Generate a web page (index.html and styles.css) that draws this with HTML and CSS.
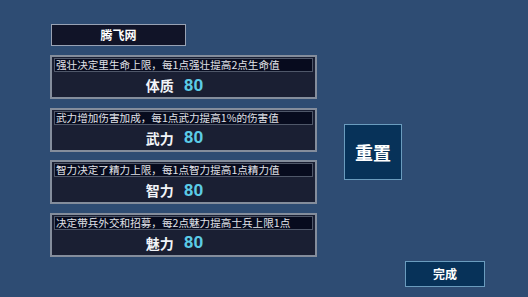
FILE: index.html
```html
<!DOCTYPE html>
<html lang="zh">
<head>
<meta charset="utf-8">
<link rel="stylesheet" href="styles.css">
</head>
<body>
<div class="screen">
  <div class="left">
    <div class="title">腾飞网</div>
    <div class="cards">
      <div class="card">
        <div class="desc">强壮决定里生命上限，每1点强壮提高2点生命值</div>
        <div class="stat"><span class="label">体质</span><span class="value">80</span></div>
      </div>
      <div class="card">
        <div class="desc">武力增加伤害加成，每1点武力提高1%的伤害值</div>
        <div class="stat"><span class="label">武力</span><span class="value">80</span></div>
      </div>
      <div class="card">
        <div class="desc">智力决定了精力上限，每1点智力提高1点精力值</div>
        <div class="stat"><span class="label">智力</span><span class="value">80</span></div>
      </div>
      <div class="card">
        <div class="desc">决定带兵外交和招募，每2点魅力提高士兵上限1点</div>
        <div class="stat"><span class="label">魅力</span><span class="value">80</span></div>
      </div>
    </div>
  </div>
  <div class="right">
    <div class="btn reset">重置</div>
    <div class="btn done">完成</div>
  </div>
</div>
</body>
</html>
```
FILE: styles.css
```css
html, body {
  margin: 0;
  padding: 0;
}
body {
  background: #2e4c73;
  font-family: "Noto Sans CJK SC", "Noto Sans", sans-serif;
  color: #fff;
}
.screen {
  width: 528px;
  height: 297px;
  box-sizing: border-box;
  padding: 24px 0 0 50px;
  display: flex;
  gap: 27px;
}
.left {
  width: 267px;
  display: flex;
  flex-direction: column;
}
.title {
  margin-left: 1px;
  width: 135px;
  height: 22px;
  box-sizing: border-box;
  background: #111428;
  border: 1px solid #98a2b4;
  display: flex;
  align-items: center;
  justify-content: center;
  font-size: 12px;
  font-weight: bold;
  line-height: 1;
}
.cards {
  margin-top: 9px;
  display: flex;
  flex-direction: column;
  gap: 8.6px;
}
.card {
  height: 44px;
  box-sizing: border-box;
  background: #1a1f33;
  border: 2px solid #848d9c;
  padding: 1px 2px 0 2px;
  display: flex;
  flex-direction: column;
}
.desc {
  height: 14px;
  box-sizing: border-box;
  background: #070b1e;
  border: 1px solid #4f5769;
  font-size: 10.6px;
  line-height: 12px;
  color: #e0e2e8;
  padding-left: 1px;
  white-space: nowrap;
  overflow: hidden;
}
.stat {
  flex: 1;
  display: flex;
  align-items: center;
  justify-content: center;
  gap: 10px;
  padding-right: 18px;
  padding-top: 1px;
}
.label {
  font-size: 14px;
  font-weight: bold;
  color: #f2f4f8;
  line-height: 1;
}
.value {
  font-family: "Roboto", "Liberation Sans", sans-serif;
  font-size: 17px;
  font-weight: bold;
  color: #5ccbe6;
  line-height: 1;
}
.right {
  display: flex;
  flex-direction: column;
  align-items: flex-start;
}
.btn {
  box-sizing: border-box;
  background: #073259;
  border: 1.5px solid #6a9cbe;
  display: flex;
  align-items: center;
  justify-content: center;
  font-weight: bold;
  color: #fff;
  line-height: 1;
}
.reset {
  margin-top: 100px;
  width: 58px;
  height: 56px;
  font-size: 18px;
}
.done {
  margin-top: 81px;
  margin-left: 61px;
  width: 80px;
  height: 26px;
  font-size: 12px;
}
```
